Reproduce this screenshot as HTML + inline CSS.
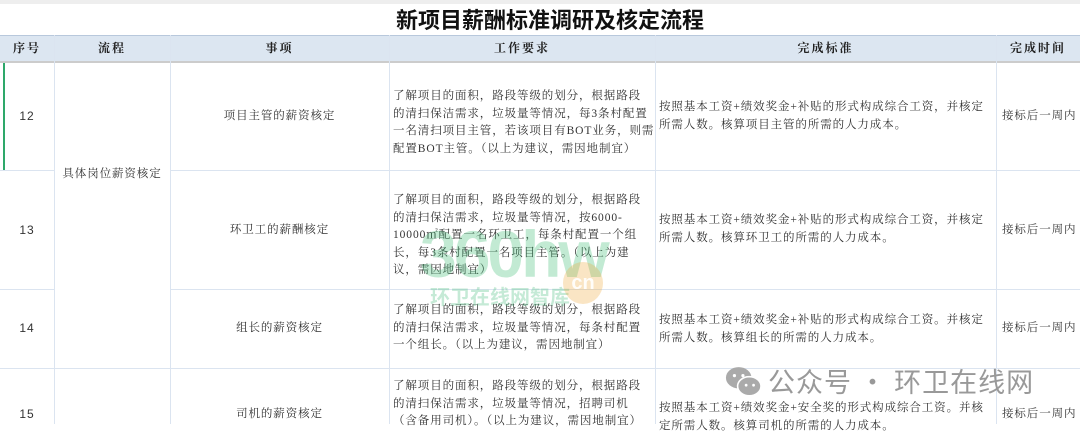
<!DOCTYPE html>
<html><head><meta charset="utf-8"><style>
body{margin:0;width:1080px;height:424px;overflow:hidden;background:#fff;font-family:"Liberation Serif","Noto Serif CJK SC",serif;color:#333;position:relative}
.a{position:absolute}
.vl{position:absolute;top:35px;bottom:0;width:1px;background:#dbe4f0}
.hl{position:absolute;height:1px;background:#dbe4f0}
.h{position:absolute;top:35px;height:26px;line-height:26px;text-align:center;font-size:12px;font-weight:bold;letter-spacing:2px;color:#222}
.t{position:absolute;font-size:11.5px;line-height:17.5px;letter-spacing:0.9px;color:#333;white-space:nowrap}
.c{text-align:center}
</style></head><body>
<div class="a" style="left:0;top:0;width:1080px;height:4px;background:#eee"></div>
<div class="a" style="left:0;top:4px;width:1080px;height:31px;text-align:center;font-family:'Liberation Sans','Noto Sans CJK SC',sans-serif;font-size:22px;font-weight:bold;line-height:34px;color:#111;padding-left:20px;box-sizing:border-box">新项目薪酬标准调研及核定流程</div>
<div class="a" style="left:0;top:35px;width:1080px;height:26px;background:#dce6f1;border-top:1px solid #b8c8dc"></div>
<div class="a" style="left:0;top:61px;width:1080px;height:2px;background:#ccc"></div>
<div class="vl" style="left:54px"></div><div class="vl" style="left:170px"></div><div class="vl" style="left:389px"></div><div class="vl" style="left:655px"></div><div class="vl" style="left:996px"></div>
<div class="hl" style="left:0;width:54px;top:170px"></div><div class="hl" style="left:170px;width:910px;top:170px"></div>
<div class="hl" style="left:0;width:54px;top:289px"></div><div class="hl" style="left:170px;width:910px;top:289px"></div>
<div class="hl" style="left:0;width:1080px;top:368px"></div>
<div class="a" style="left:3px;top:63px;width:2px;height:107px;background:#2ea86a"></div>
<div class="h" style="left:0;width:54px">序号</div>
<div class="h" style="left:54px;width:116px">流程</div>
<div class="h" style="left:170px;width:219px">事项</div>
<div class="h" style="left:389px;width:266px">工作要求</div>
<div class="h" style="left:655px;width:341px">完成标准</div>
<div class="h" style="left:996px;width:84px">完成时间</div>

<div class="t c" style="left:0;width:54px;top:108px;font-family:'Liberation Sans',sans-serif;font-size:12px">12</div>
<div class="t c" style="left:0;width:54px;top:222px;font-family:'Liberation Sans',sans-serif;font-size:12px">13</div>
<div class="t c" style="left:0;width:54px;top:320px;font-family:'Liberation Sans',sans-serif;font-size:12px">14</div>
<div class="t c" style="left:0;width:54px;top:406px;font-family:'Liberation Sans',sans-serif;font-size:12px">15</div>
<div class="t c" style="left:54px;width:116px;top:166px">具体岗位薪资核定</div>
<div class="t c" style="left:170px;width:219px;top:108px">项目主管的薪资核定</div>
<div class="t c" style="left:170px;width:219px;top:222px">环卫工的薪酬核定</div>
<div class="t c" style="left:170px;width:219px;top:320px">组长的薪资核定</div>
<div class="t c" style="left:170px;width:219px;top:406px">司机的薪资核定</div>

<div class="t" style="left:393px;top:88px">了解项目的面积，路段等级的划分，根据路段<br>的清扫保洁需求，垃圾量等情况，每3条村配置<br>一名清扫项目主管，若该项目有BOT业务，则需<br>配置BOT主管。（以上为建议，需因地制宜）</div>
<div class="t" style="left:393px;top:192px">了解项目的面积，路段等级的划分，根据路段<br>的清扫保洁需求，垃圾量等情况，按6000-<br>10000㎡配置一名环卫工，每条村配置一个组<br>长，每3条村配置一名项目主管。（以上为建<br>议，需因地制宜）</div>
<div class="t" style="left:393px;top:302px">了解项目的面积，路段等级的划分，根据路段<br>的清扫保洁需求，垃圾量等情况，每条村配置<br>一个组长。（以上为建议，需因地制宜）</div>
<div class="t" style="left:393px;top:378px">了解项目的面积，路段等级的划分，根据路段<br>的清扫保洁需求，垃圾量等情况，招聘司机<br>（含备用司机）。（以上为建议，需因地制宜）</div>

<div class="t" style="left:659px;top:99px">按照基本工资+绩效奖金+补贴的形式构成综合工资，并核定<br>所需人数。核算项目主管的所需的人力成本。</div>
<div class="t" style="left:659px;top:212px">按照基本工资+绩效奖金+补贴的形式构成综合工资，并核定<br>所需人数。核算环卫工的所需的人力成本。</div>
<div class="t" style="left:659px;top:312px">按照基本工资+绩效奖金+补贴的形式构成综合工资。并核定<br>所需人数。核算组长的所需的人力成本。</div>
<div class="t" style="left:659px;top:400px">按照基本工资+绩效奖金+安全奖的形式构成综合工资。并核<br>定所需人数。核算司机的所需的人力成本。</div>

<div class="t" style="left:1002px;top:108px">接标后一周内</div>
<div class="t" style="left:1002px;top:222px">接标后一周内</div>
<div class="t" style="left:1002px;top:320px">接标后一周内</div>
<div class="t" style="left:1002px;top:406px">接标后一周内</div>

<!-- watermark -->
<div class="a" style="left:420px;top:222px;font-family:'Liberation Sans',sans-serif;font-weight:bold;font-size:66px;line-height:64px;color:rgba(70,190,120,0.33);letter-spacing:-3px">360hw</div>
<div class="a" style="left:430px;top:283px;font-family:'Noto Sans CJK SC',sans-serif;font-weight:bold;font-size:20px;line-height:26px;color:rgba(80,190,130,0.33);letter-spacing:0px">环卫在线网智库</div>
<div class="a" style="left:563px;top:262px;width:40px;height:42px;border-radius:50%;background:rgba(240,170,60,0.3);color:rgba(255,255,255,0.9);font:bold 20px 'Liberation Sans',sans-serif;line-height:42px;text-align:center">cn</div>
<svg class="a" style="left:724px;top:365px" width="40" height="34" viewBox="0 0 36 32"><ellipse cx="13" cy="12" rx="12" ry="10" fill="#aaa"/><ellipse cx="23" cy="20" rx="11" ry="9" fill="#aaa" stroke="#fff" stroke-width="1.5"/><circle cx="9" cy="10" r="1.5" fill="#fff"/><circle cx="17" cy="10" r="1.5" fill="#fff"/><circle cx="20" cy="19" r="1.3" fill="#fff"/><circle cx="27" cy="19" r="1.3" fill="#fff"/></svg>
<div class="a" style="left:768px;top:362px;font-family:'Noto Sans CJK SC',sans-serif;font-size:27px;line-height:38px;color:#999;white-space:nowrap;letter-spacing:1px">公众号 · 环卫在线网</div>
</body></html>
